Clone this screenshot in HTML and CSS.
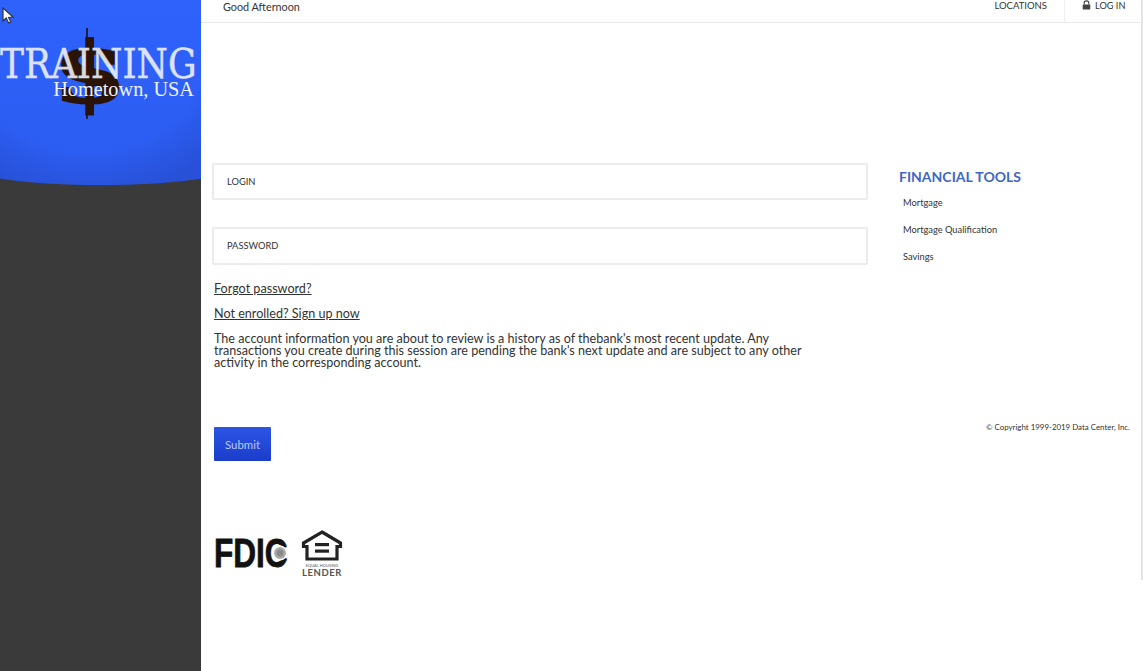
FILE: index.html
```html
<!DOCTYPE html>
<html lang="en">
<head>
    <meta charset="UTF-8">
    <title>Training - Online Banking</title>
    <link rel="stylesheet" href="styles.css">
</head>
<body>
    <aside class="sidebar">
        <div class="brand">
            <div class="logo">
                <span class="logo-bar"></span>
                <span class="logo-mark">$</span>
                <span class="logo-name">TRAINING</span>
                <span class="logo-town">Hometown, USA</span>
            </div>
        </div>
    </aside>

    <div class="page">
        <header class="topbar">
            <span class="greeting">Good Afternoon</span>
            <nav class="topnav">
                <a href="#" class="topnav-link">LOCATIONS</a>
                <a href="#" class="topnav-link login-link">
                    <svg class="lock" viewBox="0 0 10 10" width="9" height="10">
                        <path d="M2.4 4.5V3a2.6 2.6 0 0 1 5.2 0v1.5" fill="none" stroke="#444" stroke-width="1.2"/>
                        <rect x="0.8" y="4.4" width="8.4" height="5.6" rx="0.6" fill="#444"/>
                    </svg>
                    LOG IN
                </a>
            </nav>
        </header>

        <div class="content">
            <main class="main-col">
                <div class="field">LOGIN</div>
                <div class="field field-password">PASSWORD</div>
                <a href="#" class="text-link">Forgot password?</a>
                <a href="#" class="text-link">Not enrolled? Sign up now</a>
                <p class="notice">The account information you are about to review is a history as of thebank's most recent update. Any transactions you create during this session are pending the bank's next update and are subject to any other activity in the corresponding account.</p>
                <button class="submit">Submit</button>
                <div class="badges">
                    <div class="fdic">
                        <span class="fdic-text">FDIC</span>
                        <svg class="fdic-seal" viewBox="0 0 16 16" width="16" height="16">
                            <circle cx="8" cy="8" r="7.5" fill="#fff"/>
                            <circle cx="8" cy="8" r="6" fill="#aaa"/>
                            <circle cx="8" cy="8" r="3.4" fill="#8a8a8a"/>
                        </svg>
                    </div>
                    <div class="lender">
                        <svg viewBox="0 0 42 31" width="42" height="31">
                            <path d="M21 2 L39.5 13 V16.5 H36 V29 H6 V16.5 H2.5 V13 Z" fill="none" stroke="#222" stroke-width="3.2" stroke-linejoin="miter"/>
                            <rect x="14" y="13" width="14" height="3.2" fill="#222"/>
                            <rect x="14" y="19.5" width="14" height="3.2" fill="#222"/>
                        </svg>
                        <span class="lender-small">EQUAL HOUSING</span>
                        <span class="lender-big">LENDER</span>
                    </div>
                </div>
            </main>

            <aside class="tools">
                <h2>FINANCIAL TOOLS</h2>
                <ul>
                    <li>Mortgage</li>
                    <li>Mortgage Qualification</li>
                    <li>Savings</li>
                </ul>
                <p class="copyright">© Copyright 1999-2019 Data Center, Inc.</p>
            </aside>
        </div>
    </div>

    <div class="edge"></div>

    <svg class="cursor" viewBox="0 0 13 17" width="13" height="17">
        <path d="M1 1 V14 L4.2 11 L6.6 16 L8.8 15 L6.6 10.4 L11 10 Z" fill="#fff" stroke="#334" stroke-width="1.2"/>
    </svg>
</body>
</html>
```

FILE: styles.css
```css
* {
    margin: 0;
    padding: 0;
    box-sizing: border-box;
}

html, body {
    height: 100%;
}

body {
    font-family: Lato, "Open Sans", sans-serif;
    background: #fff;
    color: #333;
    display: flex;
    overflow: hidden;
}

.cursor {
    position: absolute;
    left: 2px;
    top: 7px;
}

.edge {
    position: absolute;
    right: 0;
    top: 0;
    width: 2px;
    height: 580px;
    background: #e4e4e4;
}

.sidebar {
    width: 201px;
    flex-shrink: 0;
    background: #3a3a3a;
    overflow: hidden;
}

.brand {
    width: 261px;
    height: 185px;
    margin-left: -30px;
    padding: 27px 30px 0;
    background:
        radial-gradient(ellipse 170px 150px at 45% 25%, rgba(30, 60, 170, 0) 70%, rgba(30, 60, 170, 0.35) 100%),
        linear-gradient(#2e62fb 0%, #2c5cf0 100%);
    border-radius: 0 0 50% 50% / 0 0 18px 18px;
}

.logo {
    position: relative;
    height: 95px;
    font-family: "Liberation Serif", serif;
}

.logo-bar {
    position: absolute;
    left: 86px;
    top: 1px;
    width: 2px;
    height: 91px;
    background: #1c2140;
}

.logo-mark {
    position: absolute;
    left: 53px;
    top: -3px;
    font-family: "DejaVu Serif", serif;
    font-size: 106px;
    line-height: 96px;
    font-weight: 700;
    color: #2a1408;
    -webkit-text-stroke: 2.5px #2a1408;
    transform: scaleY(0.8);
}

.logo-name {
    position: absolute;
    left: 0;
    top: 13px;
    font-family: "DejaVu Serif", serif;
    font-size: 41px;
    line-height: 48px;
    color: #f2f5ff;
    -webkit-text-stroke: 0.4px #f2f5ff;
    opacity: 0.88;
    white-space: nowrap;
    transform: scaleX(0.875);
    transform-origin: left center;
}

.logo-town {
    position: absolute;
    right: 7px;
    top: 52px;
    font-size: 20.3px;
    line-height: 20px;
    color: #eef2ff;
    white-space: nowrap;
}

.page {
    flex: 1;
    min-width: 0;
    display: flex;
    flex-direction: column;
}

.topbar {
    height: 23px;
    display: flex;
    justify-content: space-between;
    border-bottom: 1px solid #e9e9e9;
    padding-left: 22px;
}

.greeting {
    font-size: 10.8px;
    line-height: 14px;
}

.topnav {
    display: flex;
}

.topnav-link {
    font-size: 9.5px;
    line-height: 12px;
    color: #333;
    text-decoration: none;
    padding-right: 17px;
}

.login-link {
    display: flex;
    gap: 4px;
    align-items: flex-start;
    width: 79px;
    padding-left: 17px;
    padding-right: 0;
    font-size: 9.2px;
    border-left: 1px solid #eceef2;
}

.content {
    flex: 1;
    display: flex;
}

.main-col {
    width: 667px;
    padding: 140px 0 0 11px;
}

.field {
    height: 37px;
    width: 656px;
    padding-left: 13px;
    border: 2px solid #ebebeb;
    border-radius: 2px;
    font-size: 9.3px;
    line-height: 33px;
    color: #333;
}

.field-password {
    height: 38px;
    margin-top: 27px;
    margin-bottom: 15px;
}

.text-link {
    display: block;
    margin-left: 2px;
    margin-bottom: 8px;
    font-size: 12.6px;
    line-height: 17px;
    color: #333;
}

.notice {
    width: 592px;
    margin: 11px 0 0 2px;
    font-size: 12.6px;
    line-height: 12px;
}

.submit {
    display: block;
    width: 57px;
    height: 34px;
    margin: 58px 0 0 2px;
    border: none;
    border-radius: 1px;
    background: linear-gradient(#2c55e6, #1a3dc9);
    color: #b9c8f8;
    font-family: inherit;
    font-size: 11.4px;
}

.badges {
    display: flex;
    align-items: flex-start;
    gap: 14px;
    margin: 69px 0 0 2px;
}

.fdic {
    position: relative;
    width: 73px;
    height: 30px;
    margin-top: 8px;
}

.fdic-text {
    display: block;
    font-family: "Liberation Sans", sans-serif;
    font-size: 41px;
    line-height: 30px;
    font-weight: 700;
    color: #111;
    -webkit-text-stroke: 0.8px #111;
    transform: scaleX(0.77);
    transform-origin: left center;
    white-space: nowrap;
}

.fdic-seal {
    position: absolute;
    right: -1px;
    top: 7px;
}

.lender {
    display: flex;
    flex-direction: column;
    align-items: center;
    width: 42px;
    color: #555;
}

.lender-small {
    font-size: 4px;
    line-height: 5px;
    margin-top: 2px;
    white-space: nowrap;
}

.lender-big {
    font-size: 9.5px;
    line-height: 9px;
    font-weight: 700;
    letter-spacing: 0.6px;
}

.tools {
    flex: 1;
    padding: 145px 13px 0 31px;
}

.tools h2 {
    font-size: 14px;
    line-height: 17px;
    font-weight: 700;
    color: #3f66c4;
}

.tools ul {
    list-style: none;
    margin-top: 4px;
    padding-left: 4px;
}

.tools li {
    font-size: 9.3px;
    line-height: 27px;
}

.copyright {
    margin-top: 152px;
    font-size: 7.9px;
    line-height: 10px;
    text-align: right;
    white-space: nowrap;
}
```
